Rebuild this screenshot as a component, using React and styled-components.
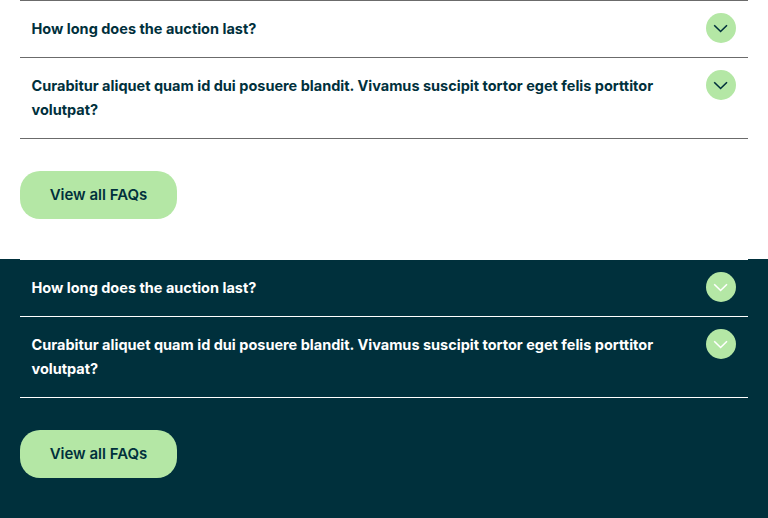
import React from "react";
import styled, { createGlobalStyle, ThemeProvider } from "styled-components";

const GlobalStyle = createGlobalStyle`
  *, *::before, *::after { box-sizing: border-box; }
  body { margin: 0; font-family: Inter, sans-serif; }
`;

const light = { background: "#ffffff", text: "#00303c", line: "#6b6b6b", icon: "#00303c" };
const dark = { background: "#00303c", text: "#ffffff", line: "#ffffff", icon: "#ffffff" };

const Section = styled.section`
  height: 259px;
  padding: 0 20px;
  background: ${({ theme }) => theme.background};
  color: ${({ theme }) => theme.text};
`;

const List = styled.div`
  border-top: 1px solid ${({ theme }) => theme.line};
`;

const Row = styled.button`
  display: flex;
  align-items: flex-start;
  justify-content: space-between;
  width: 100%;
  padding: 12px 12px 12px 11.5px;
  border: 0;
  border-bottom: 1px solid ${({ theme }) => theme.line};
  background: none;
  color: inherit;
  font: inherit;
  text-align: left;
`;

const Question = styled.span`
  max-width: 640px;
  padding: 4px 0;
  font-size: 14.5px;
  font-weight: 700;
  line-height: 24px;
`;

const Toggle = styled.span`
  display: grid;
  place-items: center;
  flex: none;
  width: 30px;
  height: 30px;
  border-radius: 50%;
  background: #b4e7a5;
  color: ${({ theme }) => theme.icon};
`;

const Action = styled.button`
  display: block;
  width: 157px;
  height: 48px;
  margin-top: 32px;
  padding: 0;
  border: 0;
  border-radius: 20px;
  background: #b4e7a5;
  color: #00303c;
  font: 600 15px/24px Inter, sans-serif;
`;

const questions = [
  "How long does the auction last?",
  "Curabitur aliquet quam id dui posuere blandit. Vivamus suscipit tortor eget felis porttitor volutpat?",
];

function Faq({ theme }) {
  return (
    <ThemeProvider theme={theme}>
      <Section>
        <List>
          {questions.map((question) => (
            <Row key={question}>
              <Question>{question}</Question>
              <Toggle>
                <svg width="30" height="30" viewBox="0 0 30 30" fill="none" stroke="currentColor" strokeWidth="1.6">
                  <path d="M8.2 12.3l6.4 6.2 6.4-6.2" />
                </svg>
              </Toggle>
            </Row>
          ))}
        </List>
        <Action>View all FAQs</Action>
      </Section>
    </ThemeProvider>
  );
}

export default function App() {
  return (
    <>
      <GlobalStyle />
      <Faq theme={light} />
      <Faq theme={dark} />
    </>
  );
}
